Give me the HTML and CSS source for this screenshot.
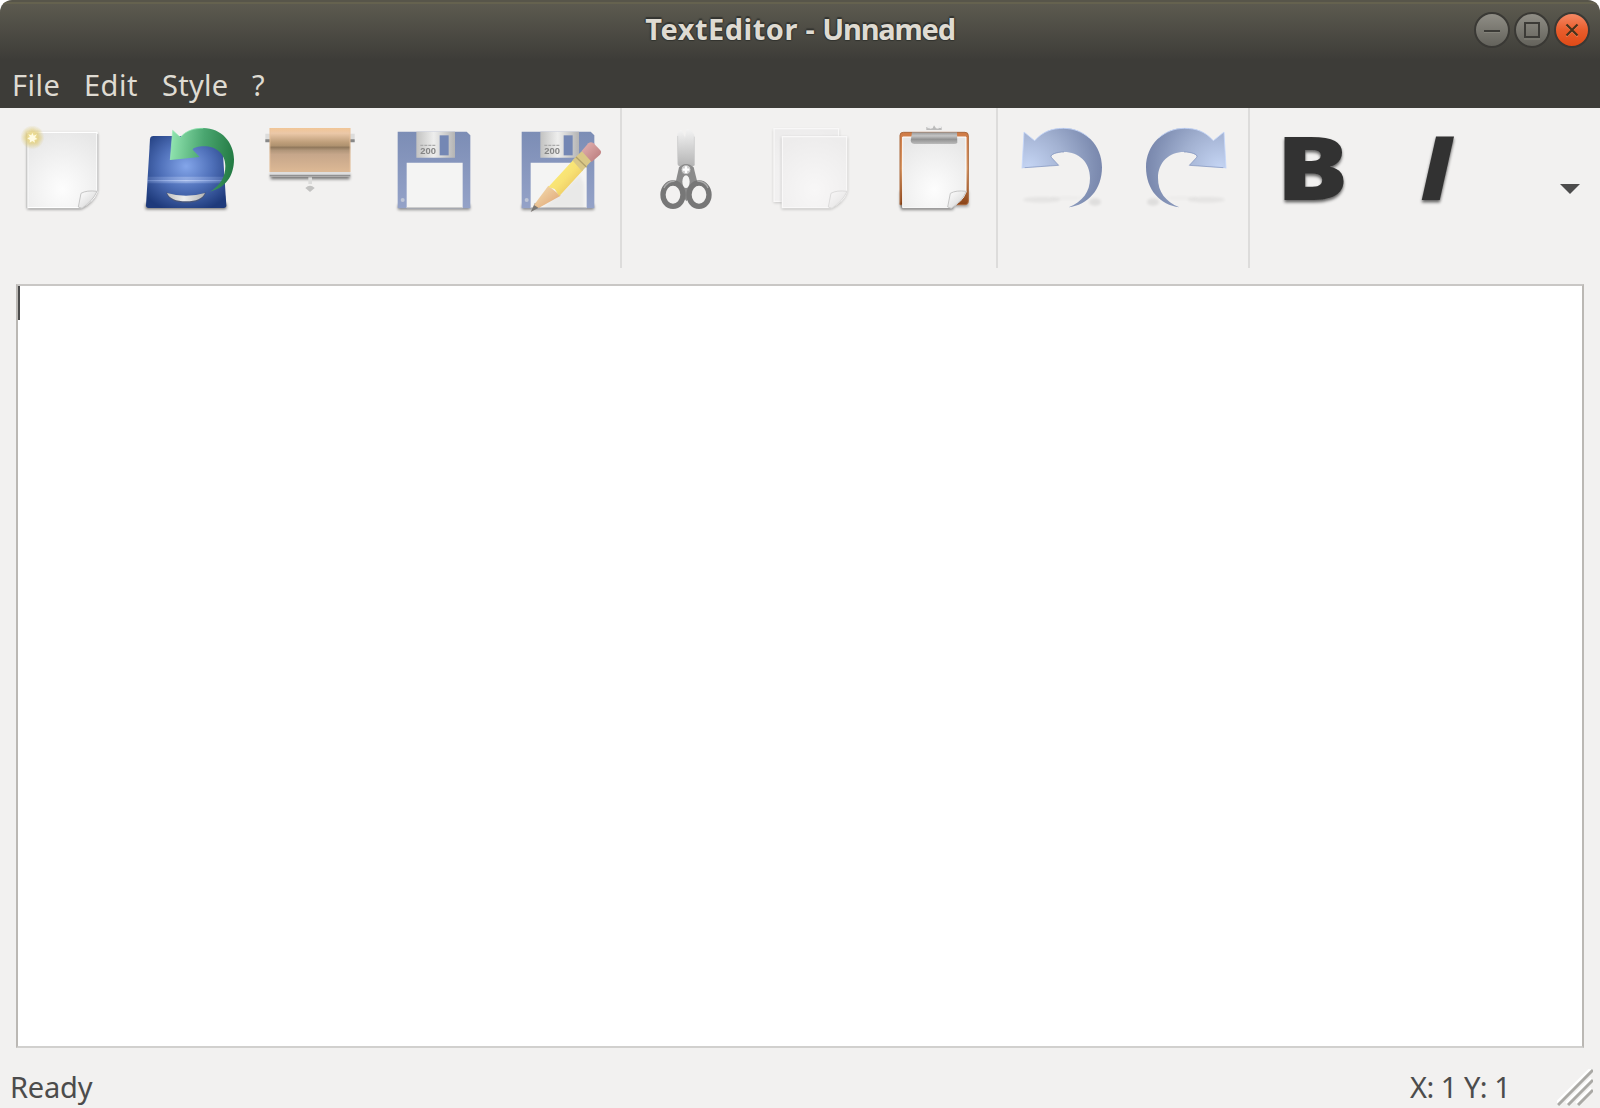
FILE: index.html
```html
<!DOCTYPE html>
<html lang="en">
<head>
<meta charset="utf-8">
<title>TextEditor - Unnamed</title>
<link rel="stylesheet" href="styles.css">
</head>
<body>
<svg class="defs" width="0" height="0" aria-hidden="true">
  <defs>
    <radialGradient id="paper" cx=".5" cy=".75" r=".8"><stop offset="0" stop-color="#fdfdfd"/><stop offset="1" stop-color="#e7e7e7"/></radialGradient>
    <linearGradient id="curl" x1="0" y1="0" x2="1" y2="1"><stop offset="0" stop-color="#fff"/><stop offset=".55" stop-color="#e6e6e6"/><stop offset="1" stop-color="#aaa"/></linearGradient>
    <radialGradient id="glow"><stop offset="0" stop-color="#fff"/><stop offset=".2" stop-color="#fff3b4"/><stop offset=".5" stop-color="#e0cd7c" stop-opacity=".65"/><stop offset="1" stop-color="#d9c66e" stop-opacity="0"/></radialGradient>
    <radialGradient id="blue" cx=".5" cy=".42" r=".65"><stop offset="0" stop-color="#84a6ea"/><stop offset=".5" stop-color="#4f70b9"/><stop offset="1" stop-color="#1e3a7b"/></radialGradient>
    <linearGradient id="shine"><stop offset="0" stop-color="#a9c0f2" stop-opacity=".3"/><stop offset=".5" stop-color="#c3d3f7" stop-opacity=".8"/><stop offset="1" stop-color="#a9c0f2" stop-opacity=".3"/></linearGradient>
    <linearGradient id="green" x1="0" y1=".4" x2="1" y2=".5"><stop offset="0" stop-color="#8fe3ae"/><stop offset=".5" stop-color="#4aa670"/><stop offset="1" stop-color="#237a43"/></linearGradient>
    <linearGradient id="silver" x1="0" y1="0" x2="1" y2="0"><stop offset="0" stop-color="#c2c2c1"/><stop offset=".45" stop-color="#eeeeed"/><stop offset="1" stop-color="#b4b4b4"/></linearGradient>
    <linearGradient id="silverV" x1="0" y1="0" x2="0" y2="1"><stop offset="0" stop-color="#999"/><stop offset=".3" stop-color="#c5c5c5"/><stop offset=".6" stop-color="#929292"/><stop offset="1" stop-color="#bbb"/></linearGradient>
    <linearGradient id="tan" x1="0" y1="0" x2="0" y2="1"><stop offset="0" stop-color="#f1c596"/><stop offset=".12" stop-color="#ebc8a8"/><stop offset=".32" stop-color="#bf9f7b"/><stop offset=".4" stop-color="#b09370"/><stop offset=".44" stop-color="#91795d"/><stop offset=".51" stop-color="#b1967a"/><stop offset=".6" stop-color="#c6a68a"/><stop offset="1" stop-color="#ddb995"/></linearGradient>
    <linearGradient id="disk" x1="0" y1="0" x2="0" y2="1"><stop offset="0" stop-color="#7c8db5"/><stop offset="1" stop-color="#94a2c8"/></linearGradient>
    <linearGradient id="pencil" x1="0" y1="0" x2="1" y2="1"><stop offset="0" stop-color="#fdf67d"/><stop offset=".5" stop-color="#f8e173"/><stop offset="1" stop-color="#dfb253"/></linearGradient>
    <linearGradient id="wood" x1="0" y1="0" x2="1" y2="1"><stop offset="0" stop-color="#f6e2b5"/><stop offset="1" stop-color="#dda070"/></linearGradient>
    <linearGradient id="eraser" x1="0" y1="0" x2="1" y2="1"><stop offset="0" stop-color="#e6b5b4"/><stop offset="1" stop-color="#b77778"/></linearGradient>
    <linearGradient id="blade" x1="0" y1="0" x2="0" y2="1"><stop offset="0" stop-color="#f4f4f4"/><stop offset="1" stop-color="#aaa"/></linearGradient>
    <linearGradient id="board" x1="0" y1="0" x2="0" y2="1"><stop offset="0" stop-color="#cf7a45"/><stop offset=".5" stop-color="#d99a67"/><stop offset="1" stop-color="#8a4216"/></linearGradient>
    <radialGradient id="arrow" gradientUnits="userSpaceOnUse" cx="85" cy="180" r="230"><stop offset="0" stop-color="#c5d5f4"/><stop offset=".5" stop-color="#a1b0d0"/><stop offset=".85" stop-color="#8190b4"/><stop offset="1" stop-color="#7684aa"/></radialGradient>
    <filter id="soft" x="-30%" y="-150%" width="160%" height="400%"><feGaussianBlur stdDeviation="4.5"/></filter>
    <filter id="drop" x="-15%" y="-15%" width="130%" height="135%"><feDropShadow dx="0" dy="7" stdDeviation="4" flood-color="#000" flood-opacity=".6"/></filter>
    <filter id="fuzz" x="-10%" y="-10%" width="120%" height="120%"><feGaussianBlur stdDeviation="1.5"/></filter>
    <g id="floppy">
      <path d="M443 71H650L661 82V301H443Z" fill="url(#disk)"/>
      <path d="M499 71H615V149H499Z" fill="url(#silver)"/>
      <path d="M569 82H596V142H569Z" fill="#7487b4"/>
      <path d="M511 112H558" stroke="#aaa" stroke-width="4" stroke-dasharray="9 3"/>
      <text class="disk-label" x="511" y="139" textLength="47" lengthAdjust="spacingAndGlyphs">200</text>
      <path d="M470 164H638V299H470Z" fill="#f4f4f3"/>
      <path d="M470 299H638" stroke="#ccc" stroke-width="4"/>
      <circle cx="458" cy="276" r="6" fill="#bec5d6"/>
    </g>
    <g id="undo">
      <ellipse cx="125" cy="275" rx="56" ry="9" opacity=".05" filter="url(#soft)"/>
      <ellipse cx="200" cy="270" rx="50" ry="6" opacity=".02" filter="url(#soft)"/>
      <ellipse cx="285" cy="282" rx="18" ry="11" opacity=".08" filter="url(#soft)"/>
      <path d="M72 72L104 98C128 70 158 60 190 60C256 60 306 112 306 178C306 245 263 292 206 298C248 280 270 252 270 210C270 162 236 132 192 132C171 132 154 139 153 147L176 172L66 181Z" fill="url(#arrow)"/>
      <path d="M66 181L72 72L104 98C128 70 158 61 190 61C220 61 246 71 268 90" fill="none" stroke="#c5d7fa" stroke-width="3" opacity=".8"/>
      <path d="M192 132C171 132 150 139 153 147L176 172L74 179" fill="none" stroke="#7588b5" stroke-width="3" opacity=".6"/>
    </g>
    <g id="curlcorner"><path d="M235 297L243 256Q260 246 291 250Q278 280 246 301Z" fill="url(#curl)" stroke="#c5c5c5" stroke-width="3"/></g>
  </defs>
</svg>

<main class="window">
  <header class="titlebar">
    <h1 class="title"><span class="app-name">TextEditor</span> - <span class="doc-name">Unnamed</span></h1>
    <div class="controls">
      <svg class="control" viewBox="0 0 36 36"><defs><linearGradient id="grey" x2="0" y2="1"><stop stop-color="#918f87"/><stop offset="1" stop-color="#62615a"/></linearGradient></defs><circle cx="18" cy="18" r="17" fill="url(#grey)" stroke="#3a3935" stroke-width="2"/><path d="M10 20.5H26" stroke="#838279"/><path d="M10 19H26" stroke="#3c3b37" stroke-width="2"/></svg>
      <svg class="control" viewBox="0 0 36 36"><circle cx="18" cy="18" r="17" fill="url(#grey)" stroke="#3a3935" stroke-width="2"/><path d="M10 27H26" stroke="#838279"/><path d="M11 11H25V25H11Z" fill="none" stroke="#3c3b37" stroke-width="2"/></svg>
      <svg class="control" viewBox="0 0 36 36"><defs><linearGradient id="orange" x2="0" y2="1"><stop stop-color="#f58b68"/><stop offset=".5" stop-color="#e95d2c"/><stop offset="1" stop-color="#de4915"/></linearGradient></defs><circle cx="18" cy="18" r="17" fill="url(#orange)" stroke="#3a3935" stroke-width="2"/><path d="M12.5 13.5L23.5 24.5M23.5 13.5L12.5 24.5" stroke="#f48a66" stroke-width="1.6"/><path d="M12.5 12.5L23.5 23.5M23.5 12.5L12.5 23.5" stroke="#47331b" stroke-width="2.2"/></svg>
    </div>
  </header>

  <nav class="menubar">
    <span class="menu menu-file">File</span>
    <span class="menu menu-edit">Edit</span>
    <span class="menu menu-style">Style</span>
    <span class="menu">?</span>
  </nav>

  <section class="toolbar">
    <svg class="tool" viewBox="0 0 372 360">
      <path d="M82 76H292V252Q282 284 244 304H82Z" opacity=".45" filter="url(#soft)"/>
      <path d="M83 73H291V252Q280 282 244 299H83Z" fill="url(#paper)" stroke="#fff" stroke-width="4"/>
      <path d="M81 76V300M293 78V250" stroke="#b9b9b9" stroke-width="2"/>
      <use href="#curlcorner"/>
      <circle cx="97" cy="88" r="36" fill="url(#glow)"/>
      <path d="M97 58L102 75L121 65L112 84L128 90L111 98L117 113L99 103L81 111L85 96L68 89L84 82L75 67L92 75Z" fill="#e3cf78" opacity=".5" filter="url(#soft)"/>
      <path d="M97 74L101 83L111 79L105 88L112 93L103 96L105 104L97 99L89 104L90 96L82 91L90 87L85 79L94 82Z" fill="#fffbe2" filter="url(#fuzz)"/>
    </svg>
    <svg class="tool" viewBox="372 0 372 360">
      <path d="M437 286H679V304H437Z" opacity=".55" filter="url(#soft)"/>
      <path d="M460 84H656Q665 84 666 94L679 292Q679 300 671 300H446Q438 300 438 292L450 94Q451 84 460 84Z" fill="url(#blue)"/>
      <path d="M441 206H676V226H441Z" fill="url(#shine)" opacity=".55" filter="url(#fuzz)"/>
      <path d="M441 216H676V220H441Z" fill="url(#shine)"/>
      <path d="M498 253Q558 276 618 253Q609 284 558 284Q507 284 498 253Z" fill="#4d5670" opacity=".8" filter="url(#fuzz)"/>
      <path d="M501 255Q558 272 615 255Q604 280 558 280Q512 280 501 255Z" fill="url(#silver)"/>
      <path d="M518 67L541 88C560 66 583 60 610 60C664 60 702 104 702 154C702 206 675 240 630 251C664 230 676 204 676 174C676 137 648 115 612 115C595 115 579 119 578 125L599 147L511 156Z" fill="url(#green)"/>
      <path d="M511 156L518 67L541 88C560 66 583 61 610 61" fill="none" stroke="#9be9b8" stroke-width="3" opacity=".7"/>
    </svg>
    <svg class="tool" viewBox="-6 0 372 360">
      <path d="M62 198H299V214H62Z" opacity=".5" filter="url(#soft)"/>
      <path d="M46 77H62V101H46ZM298 77H314V101H298Z" fill="#dcdcdb"/><path d="M46 94H62V103H46ZM298 94H314V103H298Z" fill="#888" filter="url(#fuzz)"/>
      <path d="M59 60H301V192H59Z" fill="url(#tan)"/>
      <path d="M60 60V192M300 60V192" stroke="#ecc49c" stroke-width="4" opacity=".5"/>
      <path d="M59 192H301V206H59Z" fill="#dedede"/><path d="M59 203H301" stroke="#919191" stroke-width="5"/>
      <path d="M175 208H186V228H175Z" fill="#dcdcdb" filter="url(#fuzz)"/><path d="M166 240Q180 227 194 240L180 252Z" fill="#c2c2c1" filter="url(#fuzz)"/>
    </svg>
    <svg class="tool" viewBox="366 0 372 360"><path d="M444 290H660V305H444Z" opacity=".45" filter="url(#soft)"/><use href="#floppy"/></svg>
    <svg class="tool" viewBox="-12 0 372 360">
      <path d="M66 290H282V305H66Z" opacity=".45" filter="url(#soft)"/>
      <use href="#floppy" x="-378"/>
      <path d="M125 304L240 200L252 230V300Z" opacity=".04" filter="url(#soft)"/>
      <g filter="url(#fuzz)">
        <path d="M92 312L105 284L119 298Z" fill="#7a7773"/>
        <path d="M102 291L145 233L182 263L116 300Z" fill="url(#wood)"/>
        <path d="M145 237L219 157L249 187L178 264L164 243Z" fill="url(#pencil)"/>
        <path d="M217 157L247 128L276 157L246 190Z" fill="#dac887"/>
        <path d="M228 147L260 178" stroke="#b1a06b" stroke-width="4"/>
        <path d="M245 129L265 106Q273 99 281 106L301 127Q306 133 300 140L275 162Z" fill="url(#eraser)"/>
      </g>
    </svg>
    <span class="separator"></span>
    <svg class="tool" viewBox="372 0 372 360">
      <g filter="url(#fuzz)">
        <path d="M531 84Q535 64 545 65L560 100V190L534 172Z" fill="url(#blade)"/>
        <path d="M560 62Q580 66 584 86V172L553 192V100Z" fill="url(#blade)"/>
        <path d="M533 84V170M583 86V170" stroke="#ccc" stroke-width="2"/>
        <path d="M528 218L537 178Q558 158 581 178L591 218L578 254L559 280L542 254Z" fill="#8b8b8b"/>
        <ellipse cx="558" cy="221" rx="11" ry="19" fill="#f4f4f3"/>
        <ellipse cx="519" cy="260" rx="30" ry="35" fill="#f2f1f0" stroke="#777" stroke-width="16"/>
        <ellipse cx="597" cy="260" rx="30" ry="35" fill="#f2f1f0" stroke="#777" stroke-width="16"/>
        <path d="M492 240Q502 220 524 219M592 219Q616 220 624 240" fill="none" stroke="#aaa" stroke-width="4"/>
        <circle cx="558" cy="185" r="15" fill="#ccc" stroke="#888" stroke-width="3"/>
        <path d="M548 185H568M558 175V195" stroke="#fff" stroke-width="7"/>
      </g>
    </svg>
    <svg class="tool" viewBox="-6 0 372 360"><g opacity=".5">
      <path d="M71 65H267V284H71Z" opacity=".4" filter="url(#soft)"/><path d="M72 62H266V280H72Z" fill="url(#paper)" stroke="#fff" stroke-width="4"/>
      <path d="M95 88H292V252Q282 284 244 304H95Z" opacity=".45" filter="url(#soft)"/><path d="M97 86H290V252Q280 282 244 299H97Z" fill="url(#paper)" stroke="#fff" stroke-width="4"/><use href="#curlcorner"/>
    </g></svg>
    <svg class="tool" viewBox="366 0 372 360">
      <path d="M450 250H655V296H450Z" opacity=".35" filter="url(#soft)"/>
      <path d="M450 82Q450 73 460 73H645Q655 73 655 83V280Q655 290 646 290H450Z" fill="url(#board)" stroke="#ab683c" stroke-width="3"/>
      <path d="M453 288H610V305H453Z" opacity=".5" filter="url(#soft)"/>
      <path d="M458 87H648V252Q638 282 602 299H458Z" fill="url(#paper)" stroke="#fff" stroke-width="3"/>
      <use href="#curlcorner" x="358"/>
      <g filter="url(#fuzz)"><path d="M486 73H621L622 104Q620 108 612 108H494Q484 108 482 99Z" fill="url(#silverV)"/><path d="M529 66V57H537L540 62L548 61L552 52L558 61L565 62L568 56H575V66Z" fill="#bbb"/><path d="M532 53H541V61H532ZM566 53H574V60H566Z" fill="#ededed"/></g>
    </svg>
    <span class="separator"></span>
    <svg class="tool" viewBox="0 0 372 360"><use href="#undo"/></svg>
    <svg class="tool" viewBox="372 0 372 360"><use href="#undo" transform="translate(744 0) scale(-1 1)"/></svg>
    <span class="separator"></span>
    <svg class="tool" viewBox="-24 0 372 360"><text class="bold-glyph" x="49" y="276" textLength="217" lengthAdjust="spacingAndGlyphs" filter="url(#drop)">B</text></svg>
    <svg class="tool" viewBox="348 0 372 360"><text class="bold-glyph italic-glyph" x="481" y="276" textLength="100" lengthAdjust="spacingAndGlyphs" filter="url(#drop)">I</text></svg>
    <svg class="overflow" viewBox="0 0 20 10"><path d="M0 0H20L10 10Z" fill="#4c4c4c"/></svg>
  </section>

  <section class="editor"><span class="caret"></span></section>

  <footer class="statusbar">
    <span class="ready">Ready</span>
    <span class="position">X: 1 Y: 1</span>
    <svg class="grip" viewBox="0 0 36 37"><path d="M0 35L35 0M10 35L35 10M20 35L35 20" stroke="#fff" stroke-width="5"/><path d="M1 36L36 1M11 36L36 11M21 36L36 21" stroke="#aaa9a5" stroke-width="3"/></svg>
  </footer>
</main>
</body>
</html>
```

FILE: styles.css
```css
* { box-sizing: border-box; }
body { margin: 0; background: #fff; font-family: "Noto Sans", "Open Sans", sans-serif; font-size: 29px; line-height: 40px; }
.defs { display: block; height: 0; }
.window { width: 1600px; height: 1108px; display: flex; flex-direction: column; overflow: hidden; border-radius: 12px 12px 0 0; background: #f2f1f0; color: #4c4c4c; }
.titlebar { height: 60px; flex: none; display: grid; grid-template-columns: 1fr auto 1fr; background: linear-gradient(#5d5b50, #3d3c38 58px); border-top: 2px solid #57554a; box-shadow: inset 0 2px #65624f; padding-top: 8px; }
.title { grid-column: 2; margin: -1px 0 0; color: #dfdbd2; font-size: 29px; font-weight: 700; line-height: 40px; white-space: nowrap; text-shadow: 0 -2px 1px #333430, 1px 0 1px #333430, -1px 0 1px #333430, 0 1px 1px #333430; }
.app-name { letter-spacing: .5px; }
.doc-name { letter-spacing: -1.2px; }
.controls { display: flex; justify-content: flex-end; gap: 4px; padding: 2px 10px 0 0; }
.control { width: 36px; height: 36px; }
.menubar { height: 48px; flex: none; display: flex; padding: 5px 0 0 12px; background: #3d3c38; color: #dfdbd2; }
.menu-file { width: 72px; letter-spacing: .5px; }
.menu-edit { width: 78px; letter-spacing: .5px; }
.menu-style { width: 90px; letter-spacing: .3px; }
.toolbar { height: 160px; flex: none; display: flex; }
.tool { width: 124px; height: 120px; flex: none; overflow: visible; filter: blur(.5px); }
.separator { width: 4px; height: 160px; flex: none; border-left: 2px solid #dddcdb; }
.overflow { width: 20px; height: 10px; margin: 76px 0 0 60px; }
.disk-label { font: 700 26px "Liberation Sans", sans-serif; fill: #858585; }
.bold-glyph { font: 800 266px "Open Sans", sans-serif; fill: #333; }
.italic-glyph { font-style: italic; }
.editor { height: 764px; flex: none; margin: 16px 16px 0; border: 2px solid; border-color: #c9c7c5 #bbb8b4 #d1d0ce; background: #fff; }
.caret { display: block; width: 2px; height: 34px; background: #4c4c4c; }
.statusbar { height: 60px; flex: none; display: flex; padding: 15px 0 0 10px; }
.ready { letter-spacing: -.2px; padding-top: 4px; }
.position { margin-left: auto; width: 110px; padding-top: 4px; white-space: nowrap; letter-spacing: -.5px; }
.grip { width: 36px; height: 37px; margin: 6px 7px 0 37px; }
```
